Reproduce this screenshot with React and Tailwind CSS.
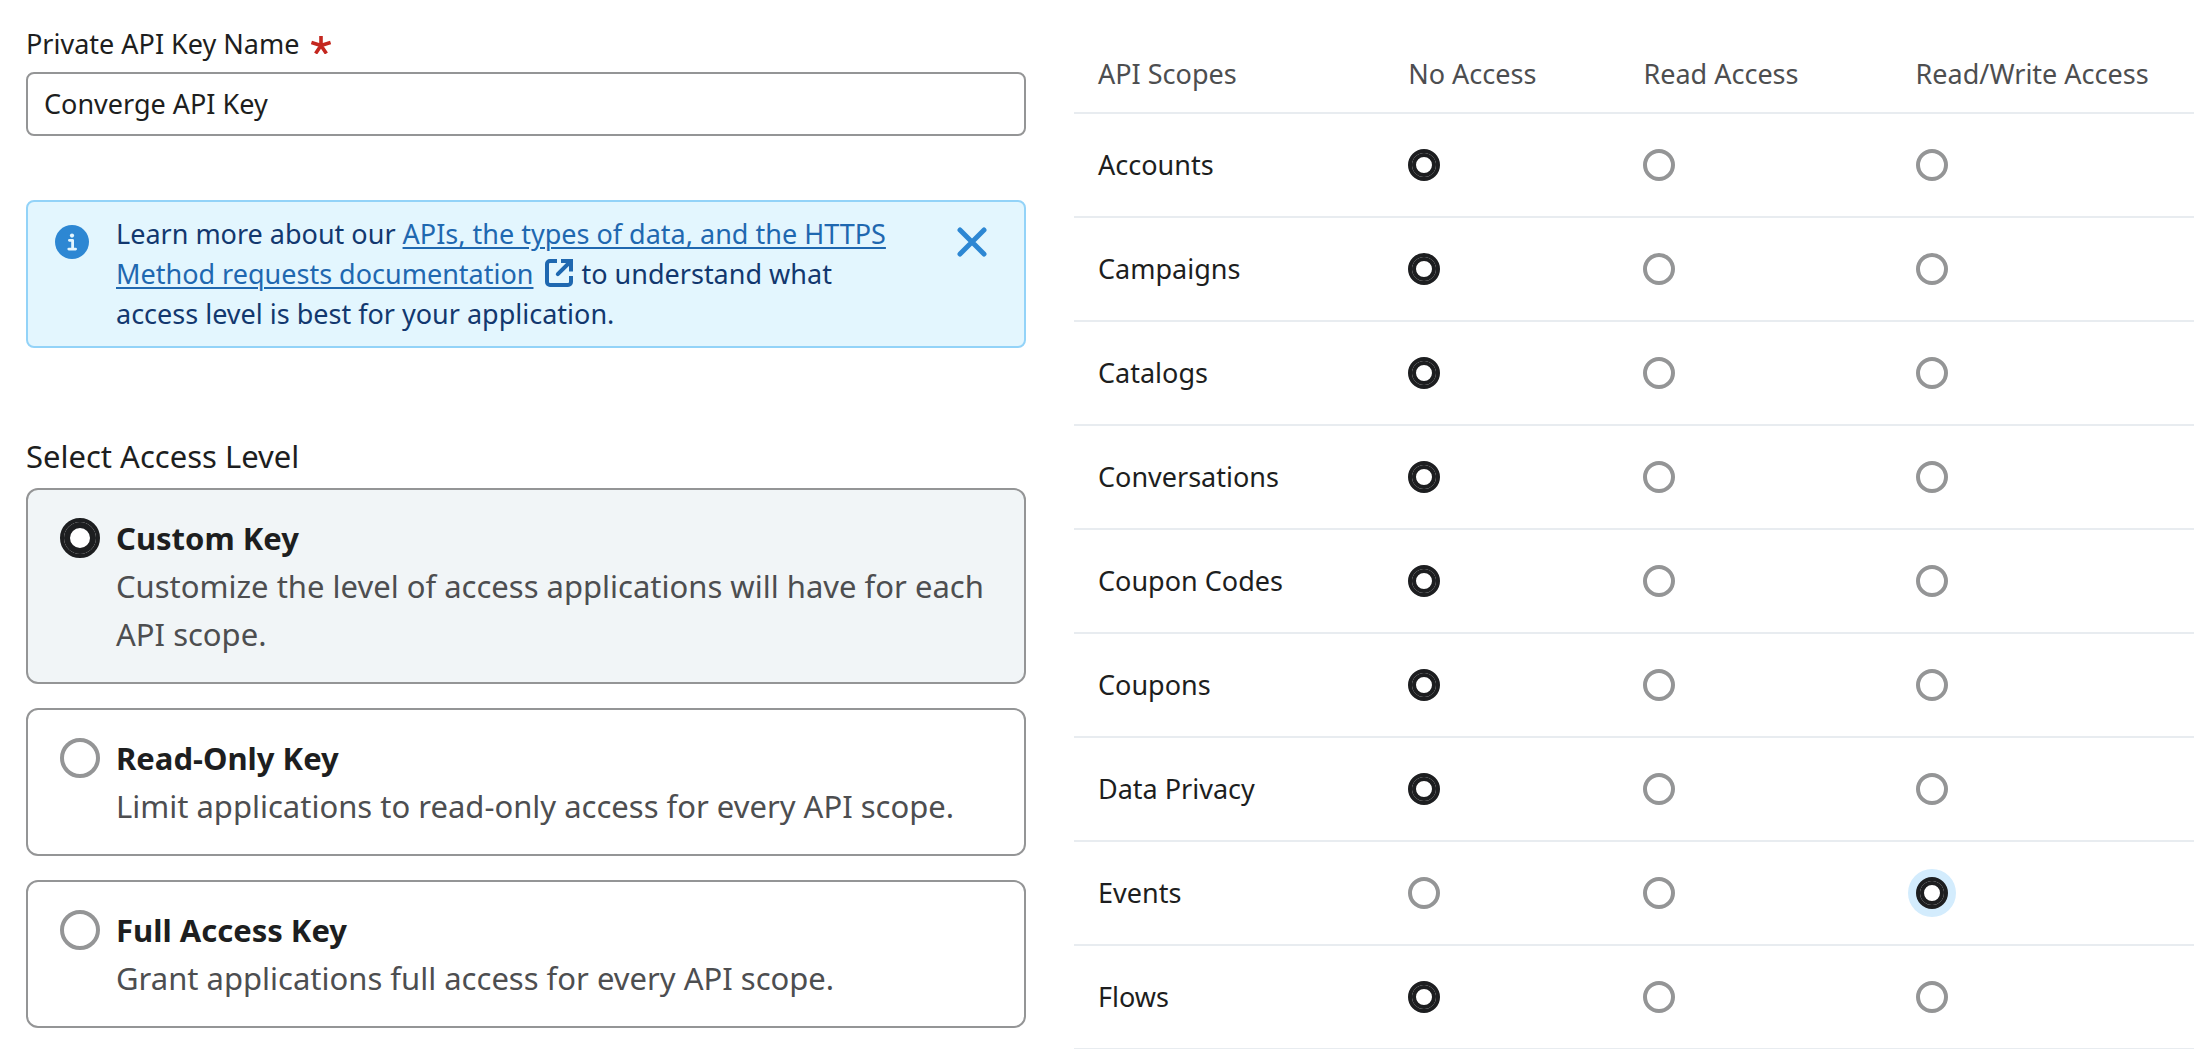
import { useState } from "react";

const ACCESS_LEVELS = [
  {
    id: "custom",
    title: "Custom Key",
    description: "Customize the level of access applications will have for each API scope.",
  },
  {
    id: "read-only",
    title: "Read-Only Key",
    description: "Limit applications to read-only access for every API scope.",
  },
  {
    id: "full",
    title: "Full Access Key",
    description: "Grant applications full access for every API scope.",
  },
];

const PERMISSIONS = ["No Access", "Read Access", "Read/Write Access"];

const SCOPES = [
  "Accounts",
  "Campaigns",
  "Catalogs",
  "Conversations",
  "Coupon Codes",
  "Coupons",
  "Data Privacy",
  "Events",
  "Flows",
];

const RADIO =
  "block shrink-0 cursor-pointer appearance-none rounded-full border-4 border-[#949596] bg-white outline-none checked:border-[#1d1e20]";

function InfoIcon() {
  return (
    <svg viewBox="0 0 34 34" className="mt-[11px] size-[34px] shrink-0" aria-hidden="true">
      <circle cx="17" cy="17" r="17" fill="#2d87d3" />
      <circle cx="17" cy="10.6" r="2.1" fill="#e3f6fe" />
      <path
        d="M14.4 15.3h3.2v8.2M13.8 24.1h6.8"
        fill="none"
        stroke="#e3f6fe"
        strokeWidth="2.8"
        strokeLinecap="round"
        strokeLinejoin="round"
      />
    </svg>
  );
}

function ExternalLinkIcon() {
  return (
    <svg
      viewBox="0 0 28 28"
      className="mr-2 ml-3 inline-block size-7 align-[-3px]"
      fill="none"
      stroke="#1f68b0"
      strokeWidth="4"
      aria-hidden="true"
    >
      <path d="M12 2H5a3 3 0 0 0-3 3v18a3 3 0 0 0 3 3h18a3 3 0 0 0 3-3v-6" />
      <path d="M12.8 15.2 24 4" strokeLinecap="round" />
      <path d="M16 2h10v10.5" />
    </svg>
  );
}

function CloseIcon() {
  return (
    <svg
      viewBox="0 0 30 30"
      className="size-[30px]"
      stroke="#2d87d3"
      strokeWidth="5"
      strokeLinecap="round"
      aria-hidden="true"
    >
      <path d="M3 3l24 24M27 3 3 27" />
    </svg>
  );
}

function InfoBanner({ onClose }) {
  return (
    <div className="mt-16 flex items-start rounded-lg border-2 border-[#93d3f8] bg-[#e3f6fe] py-3 pr-[37px] pl-[27px] text-[#12386f]">
      <InfoIcon />
      <p className="ml-[27px] flex-1 leading-10">
        Learn more about our{" "}
        <a
          href="#documentation"
          className="text-[#1f68b0] underline decoration-2 underline-offset-[3px]"
        >
          APIs, the types of data, and the HTTPS Method requests documentation
        </a>
        <ExternalLinkIcon />
        to understand what access level is best for your application.
      </p>
      <button
        type="button"
        aria-label="Dismiss"
        onClick={onClose}
        className="mt-[13px] ml-14 shrink-0 cursor-pointer"
      >
        <CloseIcon />
      </button>
    </div>
  );
}

function KeyForm() {
  const [name, setName] = useState("Converge API Key");
  const [level, setLevel] = useState("custom");
  const [showInfo, setShowInfo] = useState(true);

  return (
    <form className="pt-6">
      <label htmlFor="key-name" className="flex items-center leading-10">
        Private API Key Name
        <span className="mt-0.5 ml-3 flex text-[#c4271f]" aria-hidden="true">
          <svg viewBox="0 0 20 18" className="h-[18px] w-5" stroke="currentColor" strokeWidth="3.6">
            <path d="M10 9.5V0M10 9.5.4 6.4M10 9.5l9.6-3.1M10 9.5l-5.4 8M10 9.5l5.4 8" />
          </svg>
        </span>
      </label>
      <input
        id="key-name"
        type="text"
        required
        value={name}
        onChange={(e) => setName(e.target.value)}
        className="mt-2 block h-16 w-full rounded-lg border-2 border-[#949596] bg-white px-4 pb-0.5 outline-none"
      />

      {showInfo && <InfoBanner onClose={() => setShowInfo(false)} />}

      <fieldset className="mt-[84px] text-[31px] leading-[48px]">
        <legend className="mb-2">Select Access Level</legend>
        <div className="flex flex-col gap-6">
          {ACCESS_LEVELS.map((item) => (
            <label
              key={item.id}
              className="flex cursor-pointer items-start gap-4 rounded-xl border-2 border-[#949596] px-8 py-6 has-checked:bg-[#f1f5f7]"
            >
              <input
                type="radio"
                name="access-level"
                value={item.id}
                checked={level === item.id}
                onChange={() => setLevel(item.id)}
                className={`${RADIO} mt-1 size-10 checked:shadow-[inset_0_0_0_6px_#1d1e20]`}
              />
              <span className="flex flex-1 flex-col">
                <span className="font-bold">{item.title}</span>
                <span className="text-[#4d4e50]">{item.description}</span>
              </span>
            </label>
          ))}
        </div>
      </fieldset>
    </form>
  );
}

function ScopeTable() {
  const [access, setAccess] = useState({ Events: "Read/Write Access" });
  const [active, setActive] = useState("Events");

  return (
    <table className="mt-8 w-full table-fixed border-separate border-spacing-0 text-left leading-10">
      <thead>
        <tr className="text-[#4d4e50]">
          <th scope="col" className="h-[82px] w-[27.7%] border-b-2 border-[#e8ecf0] px-6 pt-1 font-normal">
            API Scopes
          </th>
          <th scope="col" className="w-[21%] border-b-2 border-[#e8ecf0] px-6 pt-1 font-normal">
            No Access
          </th>
          <th scope="col" className="w-[24.3%] border-b-2 border-[#e8ecf0] px-6 pt-1 font-normal">
            Read Access
          </th>
          <th
            scope="col"
            className="border-b-2 border-[#e8ecf0] px-6 pt-1 font-normal whitespace-nowrap"
          >
            Read/Write Access
          </th>
        </tr>
      </thead>
      <tbody>
        {SCOPES.map((scope) => (
          <tr key={scope} className="group">
            <th
              scope="row"
              className="h-[104px] border-b-2 border-[#e8ecf0] px-6 font-normal group-last:h-[103px] group-last:border-b"
            >
              {scope}
            </th>
            {PERMISSIONS.map((permission) => {
              const checked = (access[scope] ?? "No Access") === permission;
              return (
                <td key={permission} className="border-b-2 border-[#e8ecf0] px-6 group-last:border-b">
                  <input
                    type="radio"
                    name={scope}
                    aria-label={`${scope}: ${permission}`}
                    checked={checked}
                    onChange={() => {
                      setAccess({ ...access, [scope]: permission });
                      setActive(scope);
                    }}
                    className={`${RADIO} size-8 ${
                      checked && active === scope
                        ? "shadow-[inset_0_0_0_4px_#1d1e20,0_0_0_8px_#d3ecfd]"
                        : "checked:shadow-[inset_0_0_0_4px_#1d1e20]"
                    }`}
                  />
                </td>
              );
            })}
          </tr>
        ))}
      </tbody>
    </table>
  );
}

export default function App() {
  return (
    <main className="grid grid-cols-[1000fr_1120fr] items-start gap-12 bg-white pl-[26px] font-['Noto_Sans',sans-serif] text-[27px] text-[#1d1e20]">
      <KeyForm />
      <ScopeTable />
    </main>
  );
}
